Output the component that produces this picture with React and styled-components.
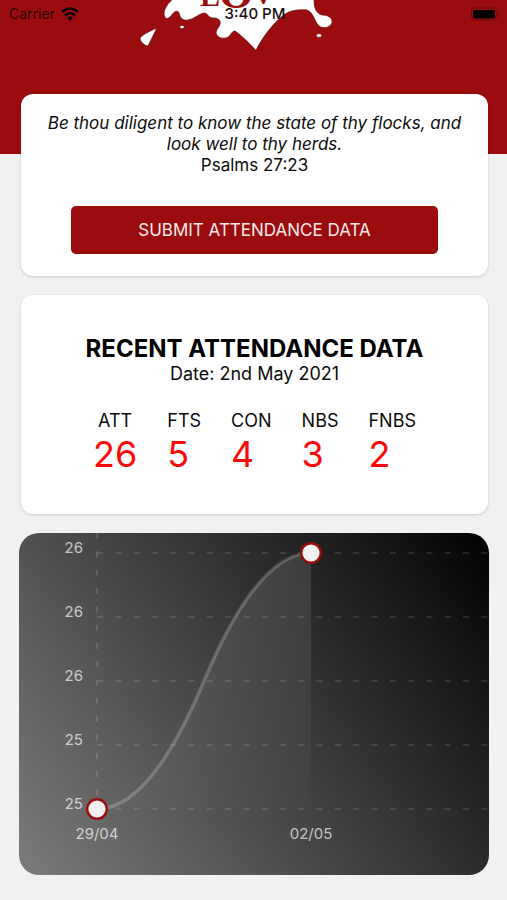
import React from "react";
import styled, { createGlobalStyle } from "styled-components";

const GlobalStyle = createGlobalStyle`
  * {
    box-sizing: border-box;
  }

  body {
    margin: 0;
    background: #f1f1f1;
    color: #0c0c0c;
    font-family: Inter, "Liberation Sans", sans-serif;
  }
`;

const Header = styled.header`
  position: relative;
  height: 154px;
  background: #9b0c0e;
`;

const Logo = styled.svg`
  position: absolute;
  top: 0;
  left: 50%;
  width: 240px;
  height: 60px;
  transform: translateX(-50%);
`;

const StatusBar = styled.div`
  position: relative;
  display: grid;
  grid-template-columns: 1fr auto 1fr;
  align-items: center;
  height: 27px;
  padding: 0 6px 0 9px;
`;

const Carrier = styled.div`
  display: flex;
  align-items: center;
  gap: 6px;
  font-size: 14px;
  color: #2b0203;
`;

const Time = styled.time`
  font-size: 15px;
  font-weight: 500;
  color: #1a1010;
`;

const BatteryIcon = styled.svg`
  justify-self: end;
`;

const Main = styled.main`
  position: relative;
  display: flex;
  flex-direction: column;
  gap: 19px;
  margin-top: -60px;
  padding: 0 18px 24px 19px;
`;

const Card = styled.section`
  display: flex;
  flex-direction: column;
  align-items: center;
  margin: 0 1px 0 2px;
  padding: ${(props) => props.$padding};
  border-radius: 12px;
  background: #fff;
  box-shadow: 0 1px 3px rgba(0, 0, 0, 0.16);
  text-align: center;
`;

const Verse = styled.blockquote`
  margin: 0 0 30px;
  font-size: 17px;
  line-height: 21px;
`;

const SubmitButton = styled.button`
  align-self: stretch;
  height: 48px;
  margin: 0 30px;
  border: 0;
  border-radius: 5px;
  background: #9b0c0e;
  color: #fbe9e9;
  font-family: inherit;
  font-size: 17px;
`;

const Title = styled.h2`
  margin: 0;
  font-size: 24px;
  font-weight: 700;
  line-height: 28px;
  color: #000;
`;

const DateLine = styled.p`
  margin: 0 0 25px;
  font-size: 18px;
  line-height: 22px;
`;

const Stats = styled.dl`
  display: flex;
  gap: 30px;
  margin: 0;
`;

const Stat = styled.div`
  text-align: ${(props) => (props.$centered ? "center" : "left")};
`;

const StatLabel = styled.dt`
  font-size: 18px;
  line-height: 22px;
`;

const StatValue = styled.dd`
  margin: 0;
  font-size: 36px;
  line-height: 44px;
  color: #fa0a0a;
`;

const Chart = styled.svg`
  display: block;
  width: 100%;
  height: auto;
  border-radius: 20px;
`;

const AxisLabel = styled.text`
  font-size: 15px;
  fill: rgba(255, 255, 255, 0.7);
`;

const stats = [
  { label: "ATT", value: 26 },
  { label: "FTS", value: 5 },
  { label: "CON", value: 4 },
  { label: "NBS", value: 3 },
  { label: "FNBS", value: 2 },
];

const rows = [
  { label: "26", y: 20 },
  { label: "26", y: 84 },
  { label: "26", y: 148 },
  { label: "25", y: 212 },
  { label: "25", y: 276 },
];

const points = [
  { label: "29/04", x: 78, y: 276 },
  { label: "02/05", x: 292, y: 20 },
];

const curve = "M78 276 Q131.5 276 185 148 Q238.5 20 292 20";

const HeartLogo = () => (
  <Logo viewBox="134 0 240 60" aria-hidden="true">
    <g fill="#fff" stroke="#6d0809" strokeWidth="0.8">
      <path d="M174 -2 C169 2 164 8 164 14 C164 19 168 20 171 16 C174 11 178 10 179 13 C180 18 183 21 188 20 C195 19 198 14 204 13 C208 13 208 18 213 18 C218 18 221 20 220 24 C219 28 216 29 216 33 C217 37 221 39 226 38 C231 37 231 31 235 31 C242 36 249 43 256 50.5 C261 40 271 25 285 14 C292 10 298 9.5 307 10 C314 13 314 21 319 26 C323 29 330 28 332 23 C333 17 327 15 322 15 C315 13 314 6 314 -2 Z" />
      <path d="M157 28 C152 30 143 34 140 38 C140 42 145 46 148 46 C151 40 154 34 157 28 Z" />
      <ellipse cx="182" cy="27" rx="2.4" ry="1.8" />
      <ellipse cx="319" cy="35.5" rx="2.8" ry="2" />
    </g>
    <g
      fill="#9b0c0e"
      fontFamily="Liberation Serif, serif"
      fontWeight="700"
    >
      <text x="200" y="6" fontSize="30">L</text>
      <text x="219" y="8" fontSize="44">O</text>
      <text x="254" y="4" fontSize="26">V</text>
    </g>
  </Logo>
);

const WifiIcon = () => (
  <svg width="18" height="14" viewBox="0 0 18 14" aria-hidden="true">
    <g fill="none" stroke="#0a0000" strokeWidth="2.6">
      <path d="M1 5 Q9 -2 17 5" />
      <path d="M4 8.4 Q9 4 14 8.4" />
    </g>
    <path d="M6.2 10.8 Q9 8.4 11.8 10.8 L9 14 Z" fill="#0a0000" />
  </svg>
);

const Battery = () => (
  <BatteryIcon width="30" height="14" viewBox="0 0 30 14" aria-hidden="true">
    <rect x="0.5" y="1" width="25" height="12" rx="3.5" fill="none" stroke="#6b0708" />
    <rect x="2" y="3" width="22" height="8.5" rx="2" fill="#000" />
    <path d="M27.5 5 Q30 7 27.5 9 Z" fill="#6b0708" />
  </BatteryIcon>
);

const AttendanceChart = () => (
  <Chart viewBox="0 0 470 342" role="img" aria-label="Attendance">
    <defs>
      <linearGradient id="background" gradientUnits="userSpaceOnUse" x1="0" y1="342" x2="470" y2="0">
        <stop offset="0" stopColor="#7c7c7c" />
        <stop offset="1" stopColor="#020202" />
      </linearGradient>
      <linearGradient id="area" x1="0" y1="0" x2="0" y2="1">
        <stop offset="0" stopColor="#fff" stopOpacity="0.12" />
        <stop offset="1" stopColor="#fff" stopOpacity="0.01" />
      </linearGradient>
    </defs>
    <rect width="470" height="342" fill="url(#background)" />
    <g stroke="#fff" strokeOpacity="0.22" strokeWidth="1.2" strokeDasharray="6.1 12.2">
      {rows.map((row) => (
        <path key={row.y} d={`M78 ${row.y}H470`} />
      ))}
      <path d="M78 0V276" />
    </g>
    <path d={`${curve} V276 H78 Z`} fill="url(#area)" />
    <path d={curve} fill="none" stroke="#fff" strokeOpacity="0.2" strokeWidth="3.6" />
    {rows.map((row) => (
      <AxisLabel key={row.y} x="64" y={row.y} textAnchor="end">
        {row.label}
      </AxisLabel>
    ))}
    {points.map((point) => (
      <g key={point.label}>
        <circle cx={point.x} cy={point.y} r="9.8" fill="#f1f1f1" stroke="#9b0c0e" strokeWidth="2.4" />
        <AxisLabel x={point.x} y="306" textAnchor="middle">
          {point.label}
        </AxisLabel>
      </g>
    ))}
  </Chart>
);

const App = () => {
  return (
    <>
      <GlobalStyle />
      <Header>
        <HeartLogo />
        <StatusBar>
          <Carrier>
            Carrier
            <WifiIcon />
          </Carrier>
          <Time>3:40 PM</Time>
          <Battery />
        </StatusBar>
      </Header>
      <Main>
        <Card $padding="19px 20px 22px">
          <Verse>
            <em>Be thou diligent to know the state of thy flocks, and look well to thy herds.</em>
            <br />
            Psalms 27:23
          </Verse>
          <SubmitButton type="button">SUBMIT ATTENDANCE DATA</SubmitButton>
        </Card>
        <Card $padding="40px 20px 38px">
          <Title>RECENT ATTENDANCE DATA</Title>
          <DateLine>Date: 2nd May 2021</DateLine>
          <Stats>
            {stats.map((stat, index) => (
              <Stat key={stat.label} $centered={index === 0}>
                <StatLabel>{stat.label}</StatLabel>
                <StatValue>{stat.value}</StatValue>
              </Stat>
            ))}
          </Stats>
        </Card>
        <AttendanceChart />
      </Main>
    </>
  );
};

export default App;
